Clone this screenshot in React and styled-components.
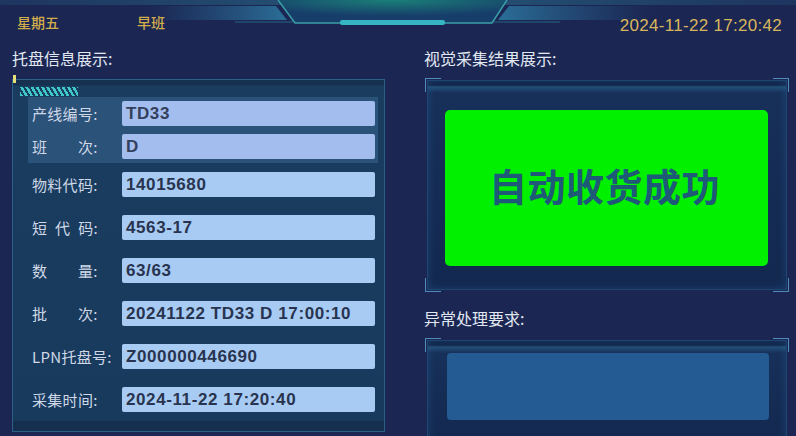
import React from "react";
import styled, { createGlobalStyle } from "styled-components";

const GlobalStyle = createGlobalStyle`
  html, body {
    margin: 0;
    padding: 0;
    background: #1b2653;
  }
  * {
    box-sizing: border-box;
  }
`;

const CJK = `"Noto Sans CJK SC", "Noto Sans", sans-serif`;
const LATIN = `"Liberation Sans", Arial, sans-serif`;

const Page = styled.div`
  width: 796px;
  height: 436px;
  overflow: hidden;
  background: #1b2653;
  font-family: ${CJK};
`;

const Header = styled.header`
  position: relative;
  height: 40px;
  display: flex;
  justify-content: space-between;
  align-items: flex-start;
  padding: 0 14px 0 17px;
`;

const HeaderArt = styled.svg`
  position: absolute;
  top: 0;
  left: 0;
  z-index: 0;
`;

const HeaderLeft = styled.div`
  position: relative;
  z-index: 1;
  display: flex;
  gap: 78px;
  margin-top: 13px;
  font-size: 14px;
  font-weight: 500;
  line-height: 18px;
  color: #d2ad4c;
`;

const Clock = styled.div`
  position: relative;
  z-index: 1;
  margin-top: 16px;
  font-family: ${LATIN};
  font-size: 17px;
  line-height: 20px;
  color: #d9b65c;
  letter-spacing: 0.3px;
`;

const Main = styled.main`
  display: grid;
  grid-template-columns: 373px 363px;
  column-gap: 39px;
  padding-left: 12px;
`;

const Column = styled.section`
  display: flex;
  flex-direction: column;
`;

const Title = styled.h2`
  margin: ${(p) => p.$top || 8}px 0 0;
  font-size: 16px;
  font-weight: 400;
  line-height: 20px;
  color: #e2e8f2;
`;

const InfoFrame = styled.div`
  position: relative;
  margin-top: 11px;
  height: 353px;
  border: 1px solid #2a6086;
  background: linear-gradient(180deg, #16304f 0, #16304f 5px, #1a3d5f 6px, #183a5c 100%);
  box-shadow: inset 0 -10px 0 #15304f;
  padding: 17px 6px 10px 15px;

  &::before {
    content: "";
    position: absolute;
    top: 7px;
    left: 7px;
    width: 58px;
    height: 9px;
    background: repeating-linear-gradient(
      60deg,
      #40c8c6 0 2.5px,
      transparent 2.5px 4.5px
    );
  }

  &::after {
    content: "";
    position: absolute;
    top: -5px;
    left: 0;
    width: 3px;
    height: 8px;
    background: #e6e07a;
  }
`;

const HighlightGroup = styled.div`
  background: #2b5278;
  padding-right: 3px;
`;

const Row = styled.div`
  height: ${(p) => p.$h}px;
  display: flex;
  align-items: center;
`;

const Label = styled.span`
  width: 94px;
  padding-left: 4px;
  font-size: 15px;
  letter-spacing: 0.3px;
  color: #d0d8e8;
  white-space: pre;
`;

const Field = styled.div`
  width: 253px;
  height: 25px;
  border-radius: 2px;
  background: ${(p) => (p.$soft ? "#a3bdef" : "#a8cbf4")};
  padding-left: 4px;
  font-family: ${LATIN};
  font-weight: 700;
  font-size: 17px;
  line-height: 26px;
  letter-spacing: 0.6px;
  color: ${(p) => (p.$soft ? "#34405c" : "#28344f")};
`;

const DisplayFrame = styled.div`
  position: relative;
  margin: ${(p) => p.$top}px 0 0 3px;
  width: 360px;
  height: ${(p) => p.$h}px;
  border: 1px solid #1f4670;
  background: linear-gradient(
    180deg,
    #112246 0,
    #112246 4px,
    #234f77 6px,
    #17305a 12px,
    #13284f 100%
  );
  box-shadow: inset 0 0 10px rgba(40, 110, 170, 0.35);
  padding: ${(p) => p.$pad};
`;

const Corner = styled.span`
  position: absolute;
  width: 16px;
  height: 14px;
  border-color: #4d8bbb;
  border-style: solid;
  border-width: 0;
  ${(p) => (p.$v === "top" ? "top: -3px;" : "bottom: -3px;")}
  ${(p) => (p.$h === "left" ? "left: -3px;" : "right: -3px;")}
  ${(p) => (p.$v === "top" ? "border-top-width: 1px;" : "border-bottom-width: 1px;")}
  ${(p) => (p.$h === "left" ? "border-left-width: 1px;" : "border-right-width: 1px;")}
`;

const SuccessBox = styled.div`
  height: 156px;
  border-radius: 5px;
  background: #00f000;
  display: flex;
  align-items: center;
  justify-content: center;
  padding: 0 4px 8px 0;
  font-size: 38px;
  font-weight: 700;
  color: #1e5a78;
  letter-spacing: 0.5px;
`;

const NoteBox = styled.div`
  height: 67px;
  border-radius: 4px;
  background: #255b93;
`;

const groupRows = [
  { label: "产线编号:", value: "TD33" },
  { label: "班\u3000\u3000次:", value: "D" },
];

const rows = [
  { label: "物料代码:", value: "14015680" },
  { label: "短\u2002代\u2002码:", value: "4563-17" },
  { label: "数\u3000\u3000量:", value: "63/63" },
  { label: "批\u3000\u3000次:", value: "20241122 TD33 D 17:00:10" },
  { label: "LPN托盘号:", value: "Z000000446690" },
  { label: "采集时间:", value: "2024-11-22 17:20:40" },
];

const Corners = () => (
  <>
    <Corner $v="top" $h="left" />
    <Corner $v="top" $h="right" />
    <Corner $v="bottom" $h="left" />
    <Corner $v="bottom" $h="right" />
  </>
);

const HeaderDecoration = () => (
  <HeaderArt width="796" height="40" viewBox="0 0 796 40">
    <defs>
      <linearGradient id="topBand" x1="0" x2="1" y1="0" y2="0">
        <stop offset="0" stopColor="#1e3560" />
        <stop offset="0.35" stopColor="#234c70" />
        <stop offset="0.65" stopColor="#234c70" />
        <stop offset="1" stopColor="#1e3560" />
      </linearGradient>
      <linearGradient id="wingL" x1="0" x2="1" y1="0" y2="0">
        <stop offset="0" stopColor="#2a6f98" stopOpacity="0" />
        <stop offset="1" stopColor="#2d7ba3" stopOpacity="0.85" />
      </linearGradient>
      <linearGradient id="wingR" x1="1" x2="0" y1="0" y2="0">
        <stop offset="0" stopColor="#2a6f98" stopOpacity="0" />
        <stop offset="1" stopColor="#2d7ba3" stopOpacity="0.85" />
      </linearGradient>
      <radialGradient id="glow" cx="0.5" cy="0" r="0.7">
        <stop offset="0" stopColor="#1a8078" />
        <stop offset="1" stopColor="#173d6a" />
      </radialGradient>
    </defs>
    <rect x="0" y="0" width="796" height="5" fill="url(#topBand)" />
    <polygon points="150,6 276,6 287,20 150,20" fill="url(#wingL)" />
    <polygon points="509,6 650,6 650,20 498,20" fill="url(#wingR)" />
    <polygon points="278,0 507,0 492,23 295,23" fill="url(#glow)" />
    <polyline
      points="278,0 295,23 492,23 507,0"
      fill="none"
      stroke="#3b9ea6"
      strokeWidth="1.5"
    />
    <line x1="235" y1="22" x2="293" y2="22" stroke="#2f7f95" strokeWidth="1" opacity="0.7" />
    <line x1="494" y1="22" x2="560" y2="22" stroke="#2f7f95" strokeWidth="1" opacity="0.7" />
    <rect x="340" y="20" width="105" height="5" rx="2" fill="#35b6c2" />
  </HeaderArt>
);

export default function App() {
  return (
    <Page>
      <GlobalStyle />
      <Header>
        <HeaderDecoration />
        <HeaderLeft>
          <span>星期五</span>
          <span>早班</span>
        </HeaderLeft>
        <Clock>2024-11-22 17:20:42</Clock>
      </Header>
      <Main>
        <Column>
          <Title>托盘信息展示:</Title>
          <InfoFrame>
            <HighlightGroup>
              {groupRows.map((r) => (
                <Row key={r.label} $h={33}>
                  <Label>{r.label}</Label>
                  <Field $soft>{r.value}</Field>
                </Row>
              ))}
            </HighlightGroup>
            {rows.map((r) => (
              <Row key={r.label} $h={43}>
                <Label>{r.label}</Label>
                <Field>{r.value}</Field>
              </Row>
            ))}
          </InfoFrame>
        </Column>
        <Column>
          <Title>视觉采集结果展示:</Title>
          <DisplayFrame $top={12} $h={210} $pad="29px 18px 0 17px">
            <Corners />
            <SuccessBox>自动收货成功</SuccessBox>
          </DisplayFrame>
          <Title $top={18}>异常处理要求:</Title>
          <DisplayFrame $top={12} $h={110} $pad="12px 17px 0 19px">
            <Corners />
            <NoteBox />
          </DisplayFrame>
        </Column>
      </Main>
    </Page>
  );
}
